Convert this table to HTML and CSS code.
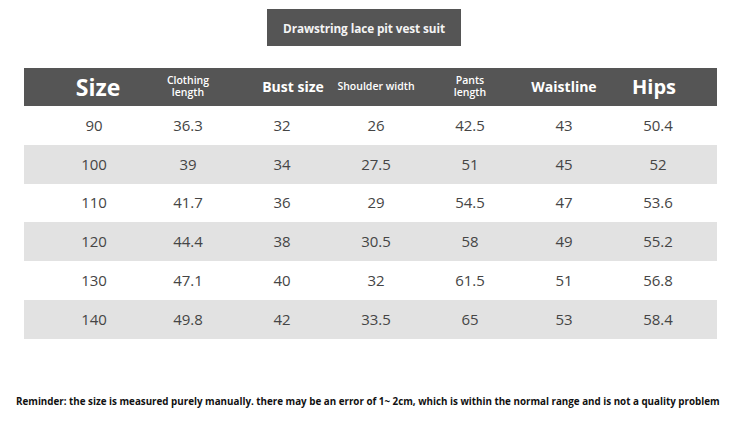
FILE: index.html
```html
<!DOCTYPE html>
<html>
<head>
<meta charset="utf-8">
<link rel="stylesheet" href="styles.css">
</head>
<body>
<div class="page">
  <div class="title-wrap"><div class="title">Drawstring lace pit vest suit</div></div>
  <div class="table">
    <div class="row head">
      <div class="cell h-xl">Size</div>
      <div class="cell h-sm">Clothing<br>length</div>
      <div class="cell h-md bust">Bust size</div>
      <div class="cell h-sm">Shoulder width</div>
      <div class="cell h-sm">Pants<br>length</div>
      <div class="cell h-md">Waistline</div>
      <div class="cell h-lg">Hips</div>
    </div>
    <div class="row"><div class="cell">90</div><div class="cell">36.3</div><div class="cell">32</div><div class="cell">26</div><div class="cell">42.5</div><div class="cell">43</div><div class="cell">50.4</div></div>
    <div class="row alt"><div class="cell">100</div><div class="cell">39</div><div class="cell">34</div><div class="cell">27.5</div><div class="cell">51</div><div class="cell">45</div><div class="cell">52</div></div>
    <div class="row"><div class="cell">110</div><div class="cell">41.7</div><div class="cell">36</div><div class="cell">29</div><div class="cell">54.5</div><div class="cell">47</div><div class="cell">53.6</div></div>
    <div class="row alt"><div class="cell">120</div><div class="cell">44.4</div><div class="cell">38</div><div class="cell">30.5</div><div class="cell">58</div><div class="cell">49</div><div class="cell">55.2</div></div>
    <div class="row"><div class="cell">130</div><div class="cell">47.1</div><div class="cell">40</div><div class="cell">32</div><div class="cell">61.5</div><div class="cell">51</div><div class="cell">56.8</div></div>
    <div class="row alt"><div class="cell">140</div><div class="cell">49.8</div><div class="cell">42</div><div class="cell">33.5</div><div class="cell">65</div><div class="cell">53</div><div class="cell">58.4</div></div>
  </div>
  <p class="note">Reminder: the size is measured purely manually. there may be an error of 1~ 2cm, which is within the normal range and is not a quality problem</p>
</div>
</body>
</html>
```
FILE: styles.css
```css
* { box-sizing: border-box; }
html, body { margin: 0; padding: 0; background: #ffffff; }
body { font-family: "Open Sans", "Noto Sans", sans-serif; width: 750px; height: 422px; overflow: hidden; }
.page { display: flex; flex-direction: column; padding-top: 9px; }
.title-wrap { display: flex; justify-content: flex-start; padding-left: 267px; }
.title {
  width: 194px; height: 37px; background: #555555; color: #f4f4f4;
  font-weight: 700; font-size: 11.8px; display: flex; align-items: center; justify-content: center;
  letter-spacing: -0.1px;
}
.table { margin: 22px 0 0 24px; width: 693px; display: flex; flex-direction: column; }
.row { display: grid; grid-template-columns: repeat(7, 94px); padding-left: 23px; height: 38.8px; align-items: center; color: #454545; font-size: 15px; }
.row.head { height: 38px; background: #555555; color: #ffffff; }
.row.alt { background: #e2e2e2; }
.cell { text-align: center; line-height: 1; }
.h-xl { font-size: 23px; font-weight: 700; padding-left: 8px; }
.h-lg { font-size: 20px; font-weight: 700; padding-right: 8px; }
.h-md { font-size: 14px; font-weight: 700; }
.h-sm { font-size: 10.5px; font-weight: 600; line-height: 1.1; }
.bust { padding-left: 22px; white-space: nowrap; }
.note { margin: 56px 0 0 16px; font-size: 9.8px; font-weight: 700; color: #111; white-space: nowrap; letter-spacing: 0; }
```
